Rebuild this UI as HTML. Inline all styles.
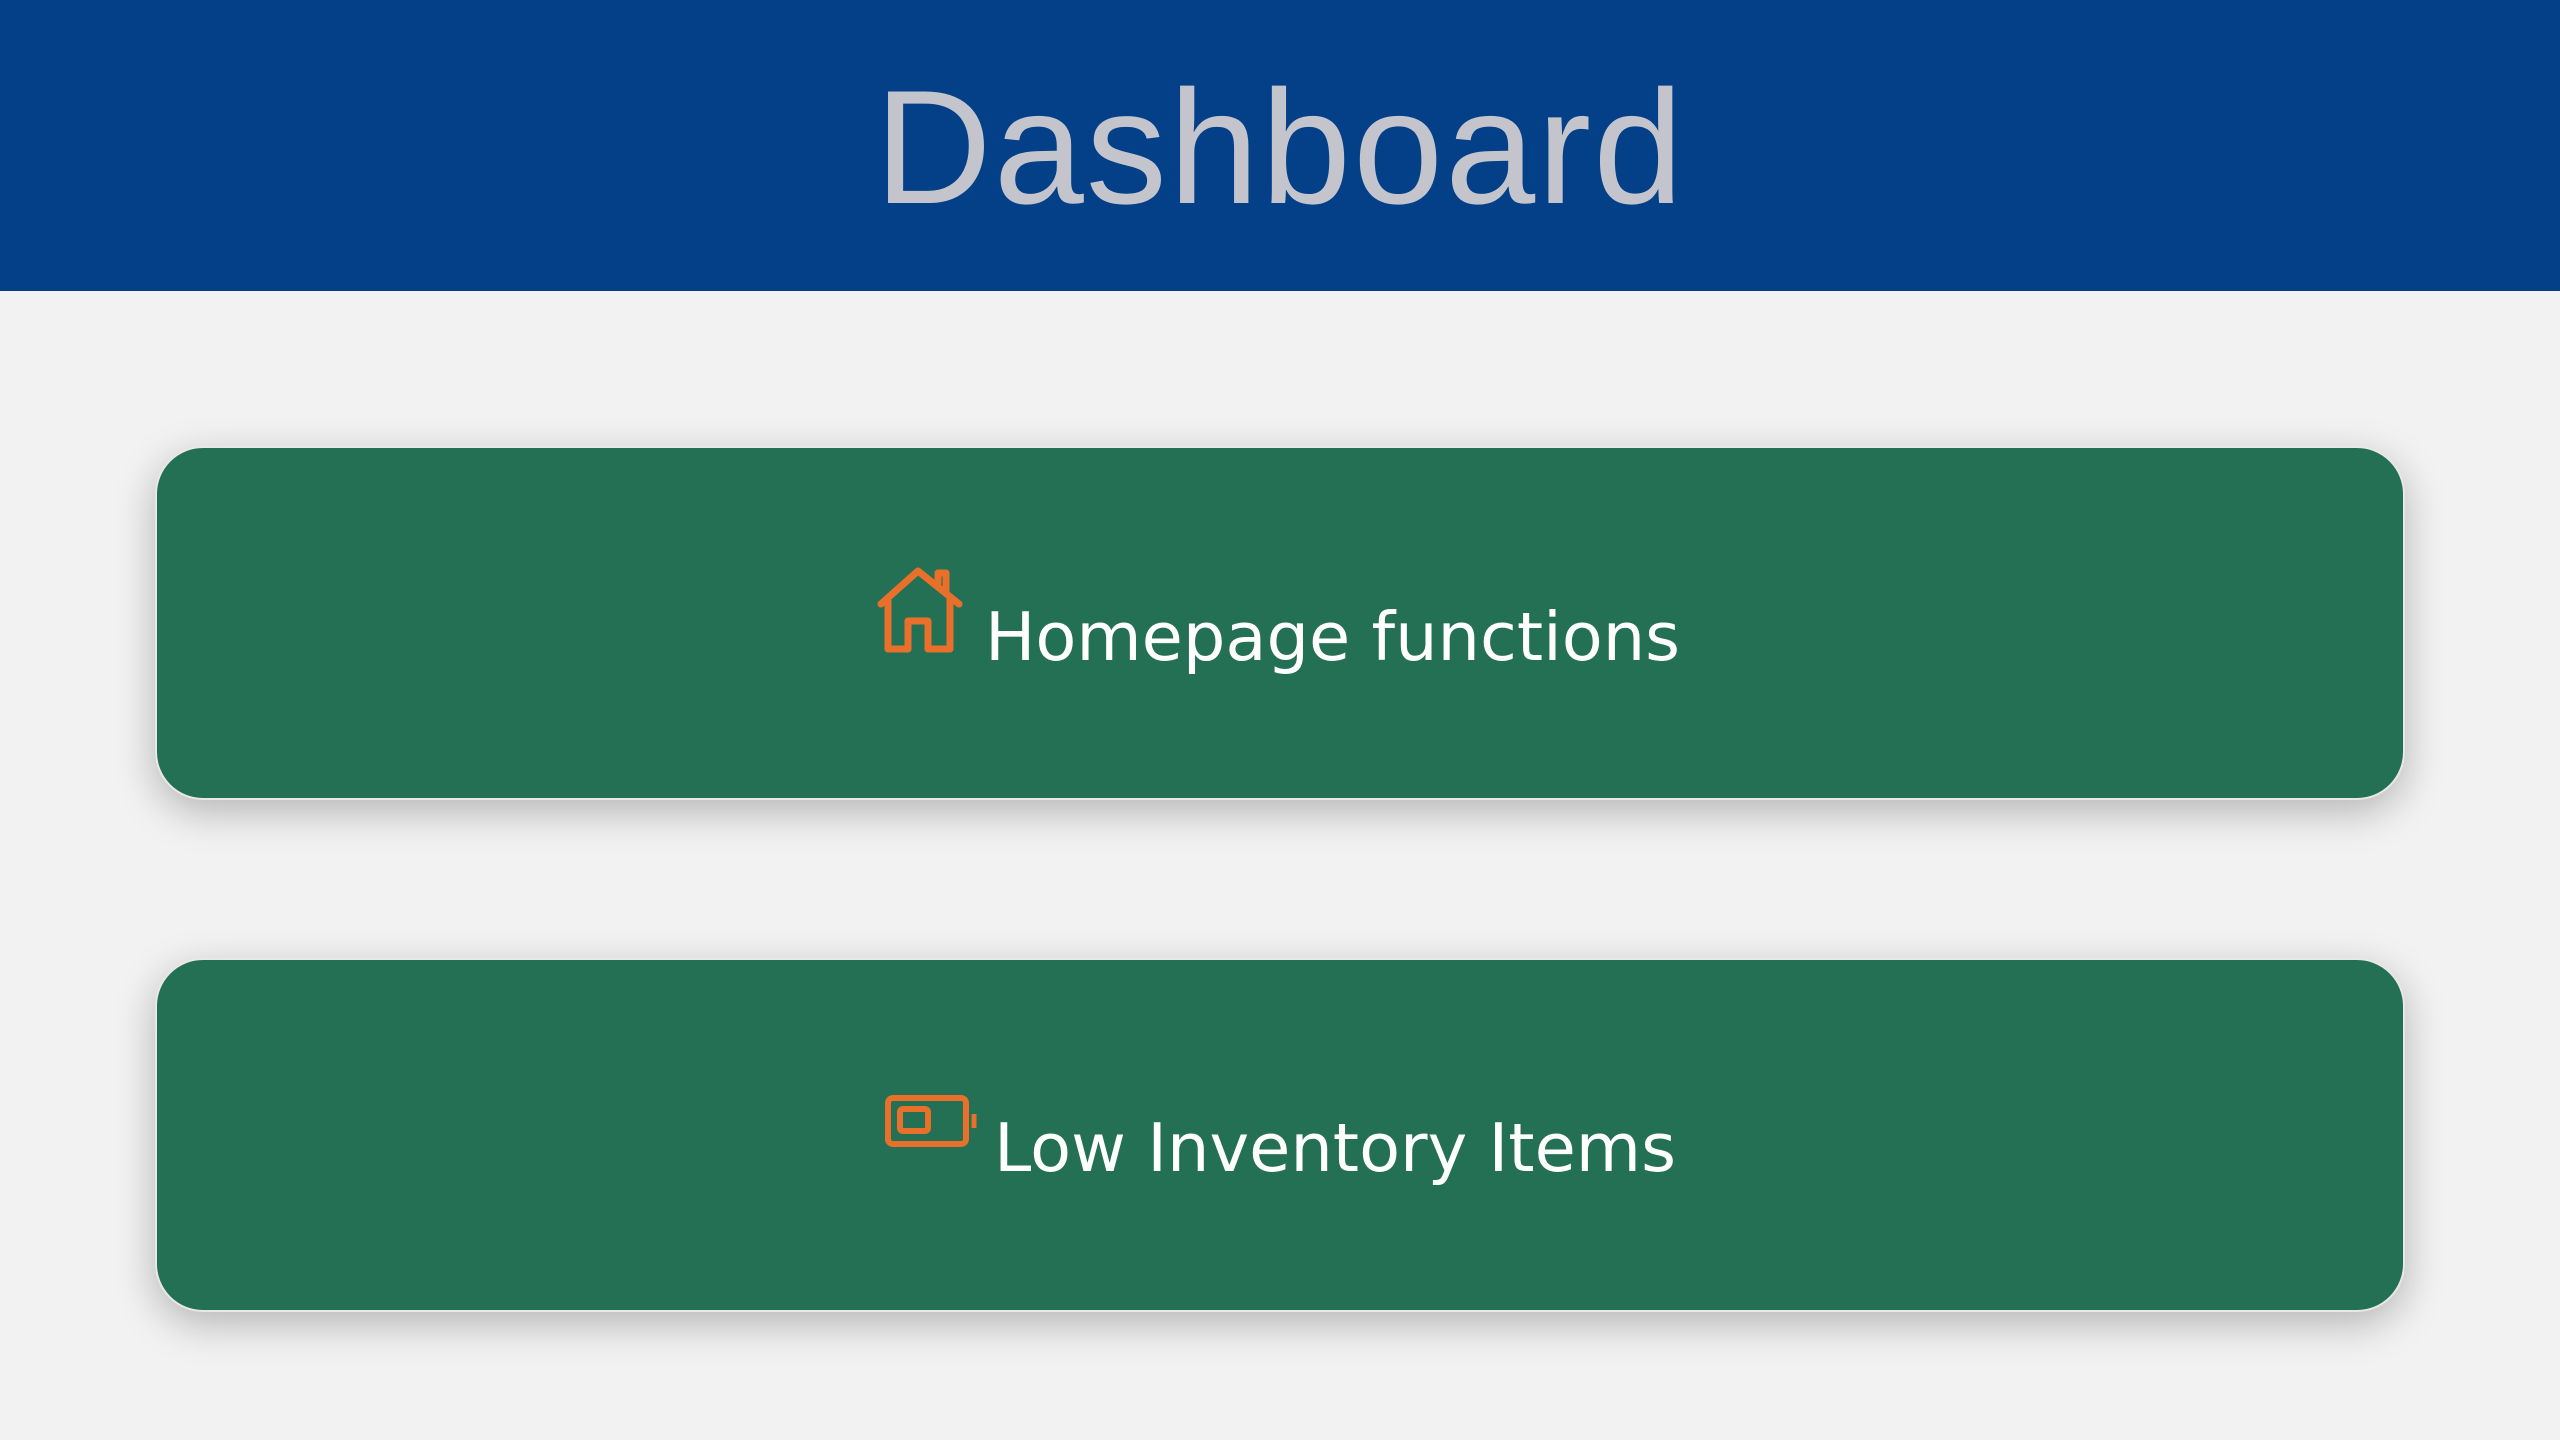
<!DOCTYPE html>
<html><head><style>
body{margin:0;width:2560px;height:1440px;background:#f2f2f2;overflow:hidden;font-family:"DejaVu Sans","Liberation Sans",sans-serif;}
.hdr{position:absolute;left:0;top:0;width:2560px;height:291px;background:#034088;}
.hdr div{position:absolute;left:0;width:2560px;top:48px;text-align:center;font-family:"Liberation Sans",sans-serif;font-size:162px;color:#c3c4cc;line-height:200px;letter-spacing:2px;}
.card{position:absolute;left:155px;width:2250px;height:354px;background:#247055;border-radius:48px;box-shadow:0 12px 40px rgba(0,0,0,0.25);border:2px solid #e8e8e8;box-sizing:border-box;}
.t{position:absolute;color:#fff;font-size:67px;white-space:nowrap;line-height:1;}
svg{position:absolute;}
</style></head><body>
<div class="hdr"><div>Dashboard</div></div>
<div class="card" style="top:446px"></div>
<div class="card" style="top:958px"></div>
<svg style="left:876px;top:566px" width="90" height="90" viewBox="0 0 90 90">
<path d="M5 38 L42 5 L83 38 M12 32 V83 H32 V55 H52 V83 H74 V32 M62 17 V7 H70 V25" fill="none" stroke="#e8702a" stroke-width="7" stroke-linejoin="round" stroke-linecap="round"/>
</svg>
<div class="t" style="left:985px;top:604px;">Homepage functions</div>
<svg style="left:884px;top:1094px" width="96" height="56" viewBox="0 0 96 56">
<rect x="4" y="4" width="78" height="46" rx="5" fill="none" stroke="#e8702a" stroke-width="6"/>
<rect x="16" y="15" width="28" height="22" rx="3" fill="none" stroke="#e8702a" stroke-width="6"/>
<line x1="90" y1="20" x2="90" y2="34" stroke="#e8702a" stroke-width="5"/>
</svg>
<div class="t" style="left:994px;top:1115px;">Low Inventory Items</div>
</body></html>
